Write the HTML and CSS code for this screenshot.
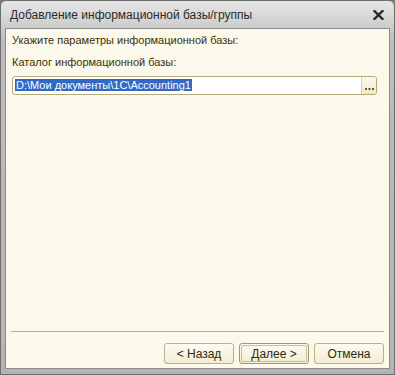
FILE: index.html
```html
<!DOCTYPE html>
<html>
<head>
<meta charset="utf-8">
<link rel="stylesheet" href="styles.css">
</head>
<body>
<div class="window">
  <div class="titlebar">
    <span class="title">Добавление информационной базы/группы</span>
    <svg class="close" width="11" height="10" viewBox="0 0 11 10">
      <path d="M1.5 1 L9.5 9 M9.5 1 L1.5 9" stroke="#262626" stroke-width="2.3" stroke-linecap="square"/>
    </svg>
  </div>
  <div class="client">
    <div class="main">
      <div class="label">Укажите параметры информационной базы:</div>
      <div class="label">Каталог информационной базы:</div>
      <div class="field">
        <div class="input"><span class="sel">D:\Мои документы\1C\Accounting1</span></div>
        <div class="dots">
          <svg width="9" height="3" viewBox="0 0 9 3"><rect x="0" y="0" width="2" height="2" fill="#6b5a10"/><rect x="3.5" y="0" width="2" height="2" fill="#6b5a10"/><rect x="7" y="0" width="2" height="2" fill="#6b5a10"/></svg>
        </div>
      </div>
    </div>
    <div class="sep"></div>
    <div class="buttons">
      <div class="btn">&lt; Назад</div>
      <div class="btn default"><span>Далее &gt;</span></div>
      <div class="btn">Отмена</div>
    </div>
  </div>
</div>
</body>
</html>
```

FILE: styles.css
```css
html, body {
  margin: 0;
  padding: 0;
  width: 395px;
  height: 375px;
  overflow: hidden;
  background: #7a7a7a;
}
.window {
  box-sizing: border-box;
  width: 395px;
  height: 375px;
  border: 1px solid #6e6e6e;
  border-radius: 6px 6px 0 0;
  background: linear-gradient(#e6e6e6, #cbcbcb 28px, #bdbdbd 40px, #b4b4b4);
  display: flex;
  flex-direction: column;
  font-family: "Liberation Sans", Arial, sans-serif;
}
.titlebar {
  height: 27px;
  display: flex;
  align-items: center;
  justify-content: space-between;
  padding: 0 10px 0 9px;
  box-sizing: border-box;
}
.title {
  font-size: 12px;
  color: #2b2b2b;
}
.close {
  display: block;
}
.client {
  flex: 1;
  margin: 0 4px 5px 4px;
  background: #fbf9ec;
  border: 1px solid #8c8c8c;
  display: flex;
  flex-direction: column;
}
.main {
  flex: 1;
  padding: 0 6px 0 6px;
}
.label {
  font-size: 11px;
  color: #3d3100;
  height: 22px;
  line-height: 22px;
}
.field {
  display: flex;
  height: 19px;
  margin-top: 3px;
  width: 365px;
  border: 1px solid #b5a97a;
  border-radius: 3px;
  background: #fff;
  box-sizing: border-box;
  overflow: hidden;
}
.input {
  flex: 1;
  padding: 2px 0 0 2px;
  font-size: 11px;
  line-height: 13px;
}
.sel {
  background: #3169c6;
  color: #fff;
  padding: 0 1px;
}
.dots {
  width: 15px;
  border-left: 1px solid #d6cfae;
  background: linear-gradient(#fbf9ee, #efe9cc);
  display: flex;
  align-items: flex-end;
  justify-content: center;
  padding-bottom: 3px;
  box-sizing: border-box;
}
.dots svg {
  display: block;
}
.sep {
  height: 1px;
  margin: 0 5px 0 5px;
  background: #b3ad8c;
}
.buttons {
  display: flex;
  justify-content: flex-end;
  gap: 5px;
  padding: 11px 5px 4px 0;
}
.btn {
  box-sizing: border-box;
  width: 70px;
  height: 21px;
  border: 1px solid #b9b08a;
  border-radius: 3px;
  background: linear-gradient(#fdfcf4, #f1ecd2);
  font-size: 12px;
  color: #2f2a10;
  display: flex;
  align-items: center;
  justify-content: center;
}
.btn.default {
  padding: 1px;
  border-color: #a49a70;
}
.btn.default span {
  flex: 1;
  align-self: stretch;
  display: flex;
  align-items: center;
  justify-content: center;
  border: 1px solid #c9c0a0;
  border-radius: 2px;
}
```
